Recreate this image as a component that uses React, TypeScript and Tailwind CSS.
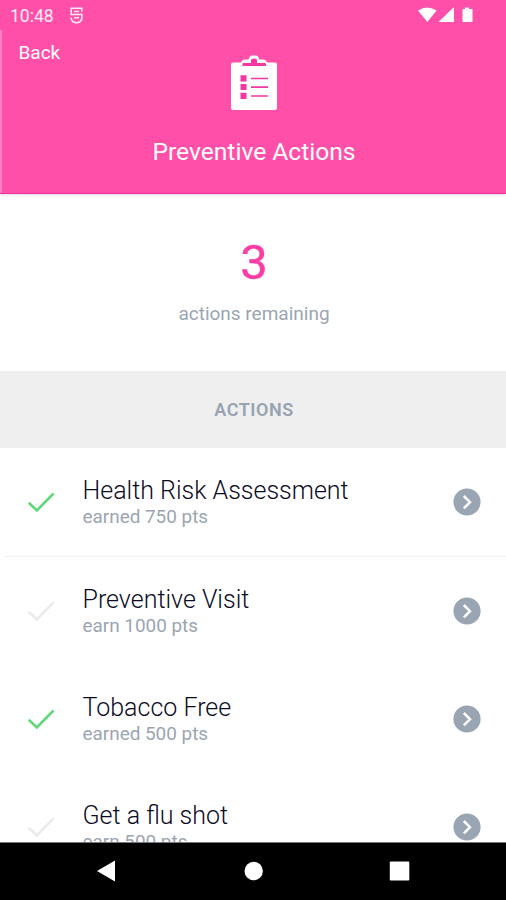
import React from "react";

interface Action {
  title: string;
  status: string;
  done: boolean;
  divider?: boolean;
}

const actions: Action[] = [
  { title: "Health Risk Assessment", status: "earned 750 pts", done: true, divider: true },
  { title: "Preventive Visit", status: "earn 1000 pts", done: false },
  { title: "Tobacco Free", status: "earned 500 pts", done: true },
  { title: "Get a flu shot", status: "earn 500 pts", done: false },
];

const StatusBar: React.FC = () => (
  <div className="flex h-[30px] items-center justify-between pl-[10px] pr-[32px]">
    <div className="flex items-center gap-[16px]">
      <span className="pt-px text-[17.5px] leading-[30px] text-white/90">10:48</span>
      <svg width="13" height="17" viewBox="0 0 13 17" fill="none" stroke="white" strokeOpacity="0.9" strokeWidth="1.5">
        <path d="M11.8 4.8V1.2H1.2V7.5H11.8V11.5Q11 15.5 6.5 15.8Q2 15.5 1.2 11.5V10.5" />
        <path d="M4 4.4H9M4 10.8H9" />
      </svg>
    </div>
    <svg width="56" height="18" viewBox="0 0 56 18" fill="white">
      <path d="M0 4.5Q9 -1.5 18.6 4.5L9.3 16Z" />
      <path d="M36 1V16H20.5Z" />
      <path d="M47 1.5H51V3H54.5V16H44.5V3H47Z" />
    </svg>
  </div>
);

const ClipboardIcon: React.FC = () => (
  <svg width="46" height="56" viewBox="0 0 46 56">
    <path
      fill="white"
      d="M2 7.5H10Q11 4.5 14 4.5H17C18.5 4.5 18 0.5 21 0.5H25C28 0.5 27.5 4.5 29 4.5H32Q35 4.5 36 7.5H44Q46 7.5 46 9.5V53Q46 55 44 55H2Q0 55 0 53V9.5Q0 7.5 2 7.5Z"
    />
    <path
      fill="#f436a0"
      d="M11.5 11V9Q11.5 8 12.5 8H20V5.5Q20 3.5 23 3.5Q26 3.5 26 5.5V8H34Q35 8 35 9V11Z"
    />
    <path fill="#f436a0" d="M9.5 20.2h6v6.2h-6zM9.5 28.9h6v6.2h-6zM9.5 37.7h6v6.2h-6z" />
    <path stroke="#f436a0" strokeWidth="1.7" d="M20 23.5H37M20 32.2H37M20 41H37" />
  </svg>
);

const ActionRow: React.FC<{ action: Action }> = ({ action }) => (
  <li className="flex h-[108.4px] shrink-0 pl-1">
    <div
      className={
        action.divider
          ? "flex flex-1 items-center border-b border-[#f0f0f0] pr-[25.5px]"
          : "flex flex-1 items-center border-b border-transparent pr-[25.5px]"
      }
    >
      <svg
        width="28"
        height="22"
        viewBox="0 0 28 22"
        fill="none"
        strokeWidth="2.6"
        className={action.done ? "ml-[23px] text-[#5fd977]" : "ml-[23px] text-[#ebebeb]"}
        stroke="currentColor"
      >
        <path d="M1.8 11.8L9.8 19.5L26.5 2.5" />
      </svg>
      <div className="ml-[27.5px] flex-1 pb-px">
        <h2 className="pt-px text-[25px] leading-[30px] font-light text-[#0b0b25]">{action.title}</h2>
        <p className="-mt-px text-[18.9px] leading-[23px] text-[#9ba5b2]">{action.status}</p>
      </div>
      <svg width="28" height="28" viewBox="0 0 28 28" fill="none">
        <circle cx="14" cy="14" r="13.6" fill="#99a5b2" />
        <path d="M10.8 8L17 14.2L10.8 20.4" stroke="white" strokeWidth="2.5" />
      </svg>
    </div>
  </li>
);

export default function App() {
  return (
    <main className="flex h-[900px] w-[506px] flex-col overflow-hidden bg-white font-['Roboto',sans-serif]">
      <header className="z-10 h-[194px] shrink-0 border-b border-b-[#f5309c] bg-[#ff4fa9] text-white shadow-[0_1px_3px_rgba(0,0,0,0.15)]">
        <StatusBar />
        <div className="flex h-[163px] flex-col border-l-2 border-[#ff80c0]">
          <button className="mt-[10px] ml-[16.5px] self-start text-[19px] leading-[26px]">Back</button>
          <div className="-mt-[11px] flex flex-col items-center">
            <ClipboardIcon />
            <h1 className="mt-[25px] text-[24.6px] leading-[32px]">Preventive Actions</h1>
          </div>
        </div>
      </header>

      <section className="flex h-[177px] shrink-0 flex-col items-center pl-[2px]">
        <div className="mt-[40px] text-[49px] leading-[58px] font-normal text-[#fb3da5] [-webkit-text-stroke:0.4px_#fb3da5]">
          3
        </div>
        <p className="mt-[9px] text-[19px] leading-[26px] text-[#9ba5b2]">actions remaining</p>
      </section>

      <div className="flex h-[77px] shrink-0 items-center justify-center bg-[#efefef] pl-[2px] text-[18px] font-semibold tracking-[0.5px] text-[#98a3b1]">
        ACTIONS
      </div>

      <ul className="flex min-h-0 flex-1 flex-col overflow-hidden pt-[0.6px]">
        {actions.map((action) => (
          <ActionRow key={action.title} action={action} />
        ))}
      </ul>

      <nav className="h-[58px] shrink-0 border-t border-[#777] bg-black">
        <svg width="506" height="57" viewBox="0 0 506 57" fill="white">
          <path d="M97 28L115 17.5V38.5Z" />
          <circle cx="253.7" cy="28" r="9.2" />
          <rect x="389.8" y="18.5" width="19.5" height="19" rx="1" />
        </svg>
      </nav>
    </main>
  );
}
